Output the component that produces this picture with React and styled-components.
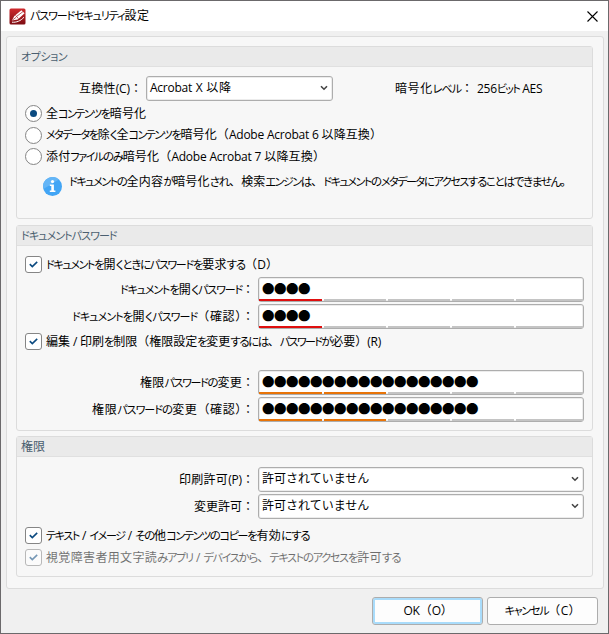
import { useState } from "react";
import styled, { createGlobalStyle } from "styled-components";

const GlobalStyle = createGlobalStyle`
  * {
    box-sizing: border-box;
  }
  body {
    margin: 0;
    background: #f0f0f0;
    font-family: "Open Sans", "Noto Sans CJK JP", sans-serif;
    font-size: 12px;
    color: #000;
  }
`;

/* kana are set tighter than kanji, so every run gets its own spacing */
const splitRuns = (text) =>
  text.match(/[\u30a1-\u30ff]+|[\u3041-\u309f]+|[\x20-\x7e]+|[^\x20-\x7e\u3041-\u30ff]+/g) || [];

const Text = ({ children, width, className }) => (
  <TextBox $width={width} className={className}>
    {splitRuns(children).map((run, index) => {
      if (/^[\u30a1-\u30ff]/.test(run)) return <Katakana key={index}>{run}</Katakana>;
      if (/^[\u3041-\u309f]/.test(run)) return <Hiragana key={index}>{run}</Hiragana>;
      if (/^[\x20-\x7e]/.test(run)) return <Latin key={index}>{run}</Latin>;
      return <span key={index}>{run}</span>;
    })}
  </TextBox>
);

const AppIcon = () => (
  <svg width="17" height="17" viewBox="0 0 17 17">
    <defs>
      <linearGradient id="red" x1="0" y1="0" x2="0" y2="1">
        <stop offset="0" stopColor="#cf2a2e" />
        <stop offset="1" stopColor="#7d0c12" />
      </linearGradient>
    </defs>
    <rect x="0.5" y="0.5" width="16" height="16" rx="1.5" fill="url(#red)" />
    <path d="M2.8 12.6L5.4 8L12.4 2.2L15.6 5.2L8.8 11.4Z" fill="#fff" />
    <path d="M3.2 12.2L7 9.4M6.6 7.4L9.4 10.6M7.6 8.4L14 3.6" stroke="#a3161c" strokeWidth="0.7" fill="none" />
    <path d="M3 14.2C7.5 14.6 11.5 13 15 9.2" stroke="#fff" strokeWidth="1" fill="none" />
  </svg>
);

const CloseIcon = () => (
  <svg width="11" height="11" viewBox="0 0 11 11">
    <path d="M0.5 0.5L10.5 10.5M10.5 0.5L0.5 10.5" stroke="#000" strokeWidth="1.1" />
  </svg>
);

const InfoIcon = () => (
  <svg width="19" height="19" viewBox="0 0 19 19">
    <circle cx="9.5" cy="9.5" r="9.5" fill="#42a5f5" />
    <path d="M0.4 12A9.5 9.5 0 0 1 16 2.6Z" fill="#64b5f6" />
    <circle cx="9.5" cy="4.6" r="1.6" fill="#fff" />
    <path d="M6.8 7.6H10.9V13.6H12.4V15H6.8V13.6H8.3V9H6.8Z" fill="#fff" />
  </svg>
);

const ChevronIcon = () => (
  <svg width="8" height="6" viewBox="0 0 8 6">
    <path d="M1 1.2L4 4.2L7 1.2" stroke="#444" strokeWidth="1.6" fill="none" />
  </svg>
);

const Check = ({ checked, disabled, width, onChange, children }) => (
  <OptionRow $disabled={disabled} onClick={() => !disabled && onChange(!checked)}>
    <CheckBox>
      {checked && (
        <svg width="9" height="7" viewBox="0 0 9 7">
          <path d="M0.8 3.2L3.3 5.6L8.2 0.9" stroke="#0b4a80" strokeWidth="1.6" fill="none" />
        </svg>
      )}
    </CheckBox>
    <Text width={width}>{children}</Text>
  </OptionRow>
);

const Radio = ({ selected, width, onSelect, children }) => (
  <OptionRow onClick={onSelect}>
    <RadioCircle>{selected && <RadioDot />}</RadioCircle>
    <Text width={width}>{children}</Text>
  </OptionRow>
);

const PasswordField = ({ label, labelWidth, length, level, color }) => (
  <FieldRow>
    <Label>
      <Text width={labelWidth}>{label}</Text>
    </Label>
    <PasswordInput>
      <Dots>{"●".repeat(length)}</Dots>
      <Strength>
        {[0, 1, 2, 3, 4].map((step) => (
          <Segment key={step} $color={step < level ? color : "#c4c4c4"} />
        ))}
      </Strength>
    </PasswordInput>
  </FieldRow>
);

const SelectField = ({ label, labelWidth, value }) => (
  <FieldRow>
    <Label>
      <Text width={labelWidth}>{label}</Text>
    </Label>
    <Select>
      <Value>{value}</Value>
      <ChevronIcon />
    </Select>
  </FieldRow>
);

const encryptOptions = [
  { text: "全コンテンツを暗号化", width: 100 },
  { text: "メタデータを除く全コンテンツを暗号化（Adobe Acrobat 6 以降互換）", width: 336 },
  { text: "添付ファイルのみ暗号化（Adobe Acrobat 7 以降互換）", width: 279 },
];

export default function App() {
  const [encrypt, setEncrypt] = useState(0);
  const [askOpen, setAskOpen] = useState(true);
  const [restrict, setRestrict] = useState(true);
  const [copy, setCopy] = useState(true);

  return (
    <>
      <GlobalStyle />
      <Window>
        <TitleBar>
          <AppIcon />
          <TitleText width={119}>パスワードセキュリティ設定</TitleText>
          <CloseIcon />
        </TitleBar>
        <Panel>
          <Group $height={173} $gap={6}>
            <GroupTitle>
              <Text width={45}>オプション</Text>
            </GroupTitle>
            <CompatRow>
              <Label>
                <Text width={63}>互換性(C)：</Text>
              </Label>
              <Select>
                <Text width={81}>Acrobat X 以降</Text>
                <ChevronIcon />
              </Select>
              <Level>
                <Text width={78}>暗号化レベル：</Text>
                <Text width={65}>256ビット AES</Text>
              </Level>
            </CompatRow>
            <RadioList>
              {encryptOptions.map((option, index) => (
                <Radio
                  key={option.text}
                  width={option.width}
                  selected={encrypt === index}
                  onSelect={() => setEncrypt(index)}
                >
                  {option.text}
                </Radio>
              ))}
            </RadioList>
            <InfoRow>
              <InfoIcon />
              <InfoText width={503}>
                ドキュメントの全内容が暗号化され、検索エンジンは、ドキュメントのメタデータにアクセスすることはできません。
              </InfoText>
            </InfoRow>
          </Group>

          <Group $height={206} $gap={5}>
            <GroupTitle>
              <Text width={95}>ドキュメントパスワード</Text>
            </GroupTitle>
            <Section $top={10}>
              <Check checked={askOpen} onChange={setAskOpen} width={232}>
                ドキュメントを開くときにパスワードを要求する（D）
              </Check>
            </Section>
            <Fields $top={4}>
              <PasswordField label="ドキュメントを開くパスワード：" labelWidth={134} length={4} level={1} color="#df0f0f" />
              <PasswordField label="ドキュメントを開くパスワード（確認）：" labelWidth={182} length={4} level={1} color="#df0f0f" />
            </Fields>
            <Section $top={4}>
              <Check checked={restrict} onChange={setRestrict} width={335}>
                編集 / 印刷を制限（権限設定を変更するには、パスワードが必要）(R)
              </Check>
            </Section>
            <Fields $top={20}>
              <PasswordField label="権限パスワードの変更：" labelWidth={114} length={18} level={2} color="#e87408" />
              <PasswordField label="権限パスワードの変更（確認）：" labelWidth={162} length={18} level={2} color="#e87408" />
            </Fields>
          </Group>

          <Group $height={141} $gap={0}>
            <GroupTitle>
              <Text width={24}>権限</Text>
            </GroupTitle>
            <Fields $top={10}>
              <SelectField label="印刷許可(P)：" labelWidth={75} value="許可されていません" />
              <SelectField label="変更許可：" labelWidth={60} value="許可されていません" />
            </Fields>
            <Section $top={8}>
              <Check checked={copy} onChange={setCopy} width={263}>
                テキスト / イメージ / その他コンテンツのコピーを有効にする
              </Check>
              <Check checked disabled width={354}>
                視覚障害者用文字読みアプリ / デバイスから、テキストのアクセスを許可する
              </Check>
            </Section>
          </Group>
        </Panel>
        <Footer>
          <Button $primary>
            <Text width={48}>OK（O）</Text>
          </Button>
          <Button>
            <Text width={76}>キャンセル（C）</Text>
          </Button>
        </Footer>
      </Window>
    </>
  );
}

/* styled */

const TextBox = styled.span`
  display: block;
  flex: none;
  width: ${(props) => props.$width}px;
  line-height: 18px;
  white-space: nowrap;
  text-align: justify;
  text-align-last: justify;
`;

const Katakana = styled.span`
  font-size: 11px;
  line-height: 1;
  font-feature-settings: "palt";
  letter-spacing: -1.6px;
`;

const Hiragana = styled.span`
  font-size: 11.5px;
  line-height: 1;
  font-feature-settings: "palt";
  letter-spacing: -1.5px;
`;

const Latin = styled.span`
  letter-spacing: -0.25px;
`;

const Window = styled.div`
  width: 609px;
  height: 634px;
  border: 1px solid #6b696b;
  background: #f0f0f0;
  overflow: hidden;
`;

const TitleBar = styled.div`
  display: flex;
  align-items: center;
  height: 30px;
  padding: 0 10px 0 8px;
  background: #fff;
`;

const TitleText = styled(Text)`
  margin: 0 auto 0 4px;
`;

const Panel = styled.div`
  display: flex;
  flex-direction: column;
  width: 598px;
  height: 553px;
  margin: 5px 0 0 5px;
  padding: 9px;
  border: 1px solid #dcdcdc;
  border-radius: 3px;
  background: #f7f7f7;
`;

const Group = styled.div`
  flex: none;
  width: 577px;
  height: ${(props) => props.$height}px;
  margin-bottom: ${(props) => props.$gap}px;
  border: 1px solid #dcdcdc;
  border-radius: 3px;
`;

const GroupTitle = styled.div`
  display: flex;
  align-items: center;
  height: 20px;
  padding-left: 4px;
  border-bottom: 1px solid #e0e0e0;
  background: #eaeaea;
  color: #4b5f70;
`;

const Label = styled.div`
  display: flex;
  justify-content: flex-end;
`;

const Select = styled.div`
  display: flex;
  align-items: center;
  justify-content: space-between;
  height: 25px;
  padding: 0 4px 1px 3px;
  border: 1px solid #adadad;
  border-radius: 3px;
  background: #fff;
  box-shadow: inset 0 0 0 1px #ececec;
`;

const Value = styled.span`
  line-height: 18px;
`;

const CompatRow = styled.div`
  display: grid;
  grid-template-columns: 125px 187px auto;
  column-gap: 4px;
  align-items: center;
  margin-top: 9px;
`;

const Level = styled.div`
  display: flex;
  gap: 4px;
  margin-left: 58px;
`;

const RadioList = styled.div`
  display: flex;
  flex-direction: column;
  justify-content: space-between;
  height: 60px;
  margin: 4px 0 0 8px;
`;

const OptionRow = styled.div`
  display: flex;
  align-items: center;
  gap: 4px;
  height: 17px;
  opacity: ${(props) => (props.$disabled ? 0.55 : 1)};
`;

const RadioCircle = styled.span`
  display: flex;
  align-items: center;
  justify-content: center;
  width: 17px;
  height: 17px;
  border: 1px solid #858585;
  border-radius: 50%;
  background: #fff;
`;

const RadioDot = styled.span`
  width: 7px;
  height: 7px;
  border-radius: 50%;
  background: #0b4a80;
`;

const CheckBox = styled.span`
  display: flex;
  align-items: center;
  justify-content: center;
  width: 17px;
  height: 17px;
  border: 1px solid #858585;
  border-radius: 3px;
  background: #fff;
`;

const InfoRow = styled.div`
  display: flex;
  align-items: flex-start;
  gap: 7px;
  margin: 12px 0 0 26px;
`;

const InfoText = styled(Text)`
  margin-top: -4px;
`;

const Section = styled.div`
  display: flex;
  flex-direction: column;
  gap: 5px;
  margin: ${(props) => props.$top}px 0 0 8px;
`;

const Fields = styled.div`
  display: flex;
  flex-direction: column;
  gap: 2px;
  margin-top: ${(props) => props.$top}px;
`;

const FieldRow = styled.div`
  display: grid;
  grid-template-columns: 237px 326px;
  column-gap: 4px;
  align-items: center;
`;

const PasswordInput = styled.div`
  display: flex;
  flex-direction: column;
  justify-content: space-between;
  height: 25px;
  border: 1px solid #adadad;
  border-radius: 3px;
  background: #fff;
  box-shadow: inset 0 0 0 1px #ececec;
`;

const Dots = styled.span`
  padding-left: 3px;
  font-family: "Noto Sans CJK JP", sans-serif;
  font-size: 12.5px;
  line-height: 21px;
  letter-spacing: -0.5px;
`;

const Strength = styled.div`
  display: grid;
  grid-template-columns: 63px 62px 62px 62px auto;
  column-gap: 2px;
  height: 2px;
`;

const Segment = styled.span`
  background: ${(props) => props.$color};
`;

const Footer = styled.div`
  display: flex;
  justify-content: flex-end;
  gap: 4px;
  margin: 8px 10px 0 0;
`;

const Button = styled.button`
  display: flex;
  align-items: center;
  justify-content: center;
  width: 111px;
  height: 28px;
  padding: 0;
  border: 1px solid #adadad;
  border-radius: 3px;
  background: #fdfdfd;
  box-shadow: ${(props) => (props.$primary ? "inset 0 0 0 2px #a9dcfb" : "none")};
  font: inherit;
  color: #000;
`;
